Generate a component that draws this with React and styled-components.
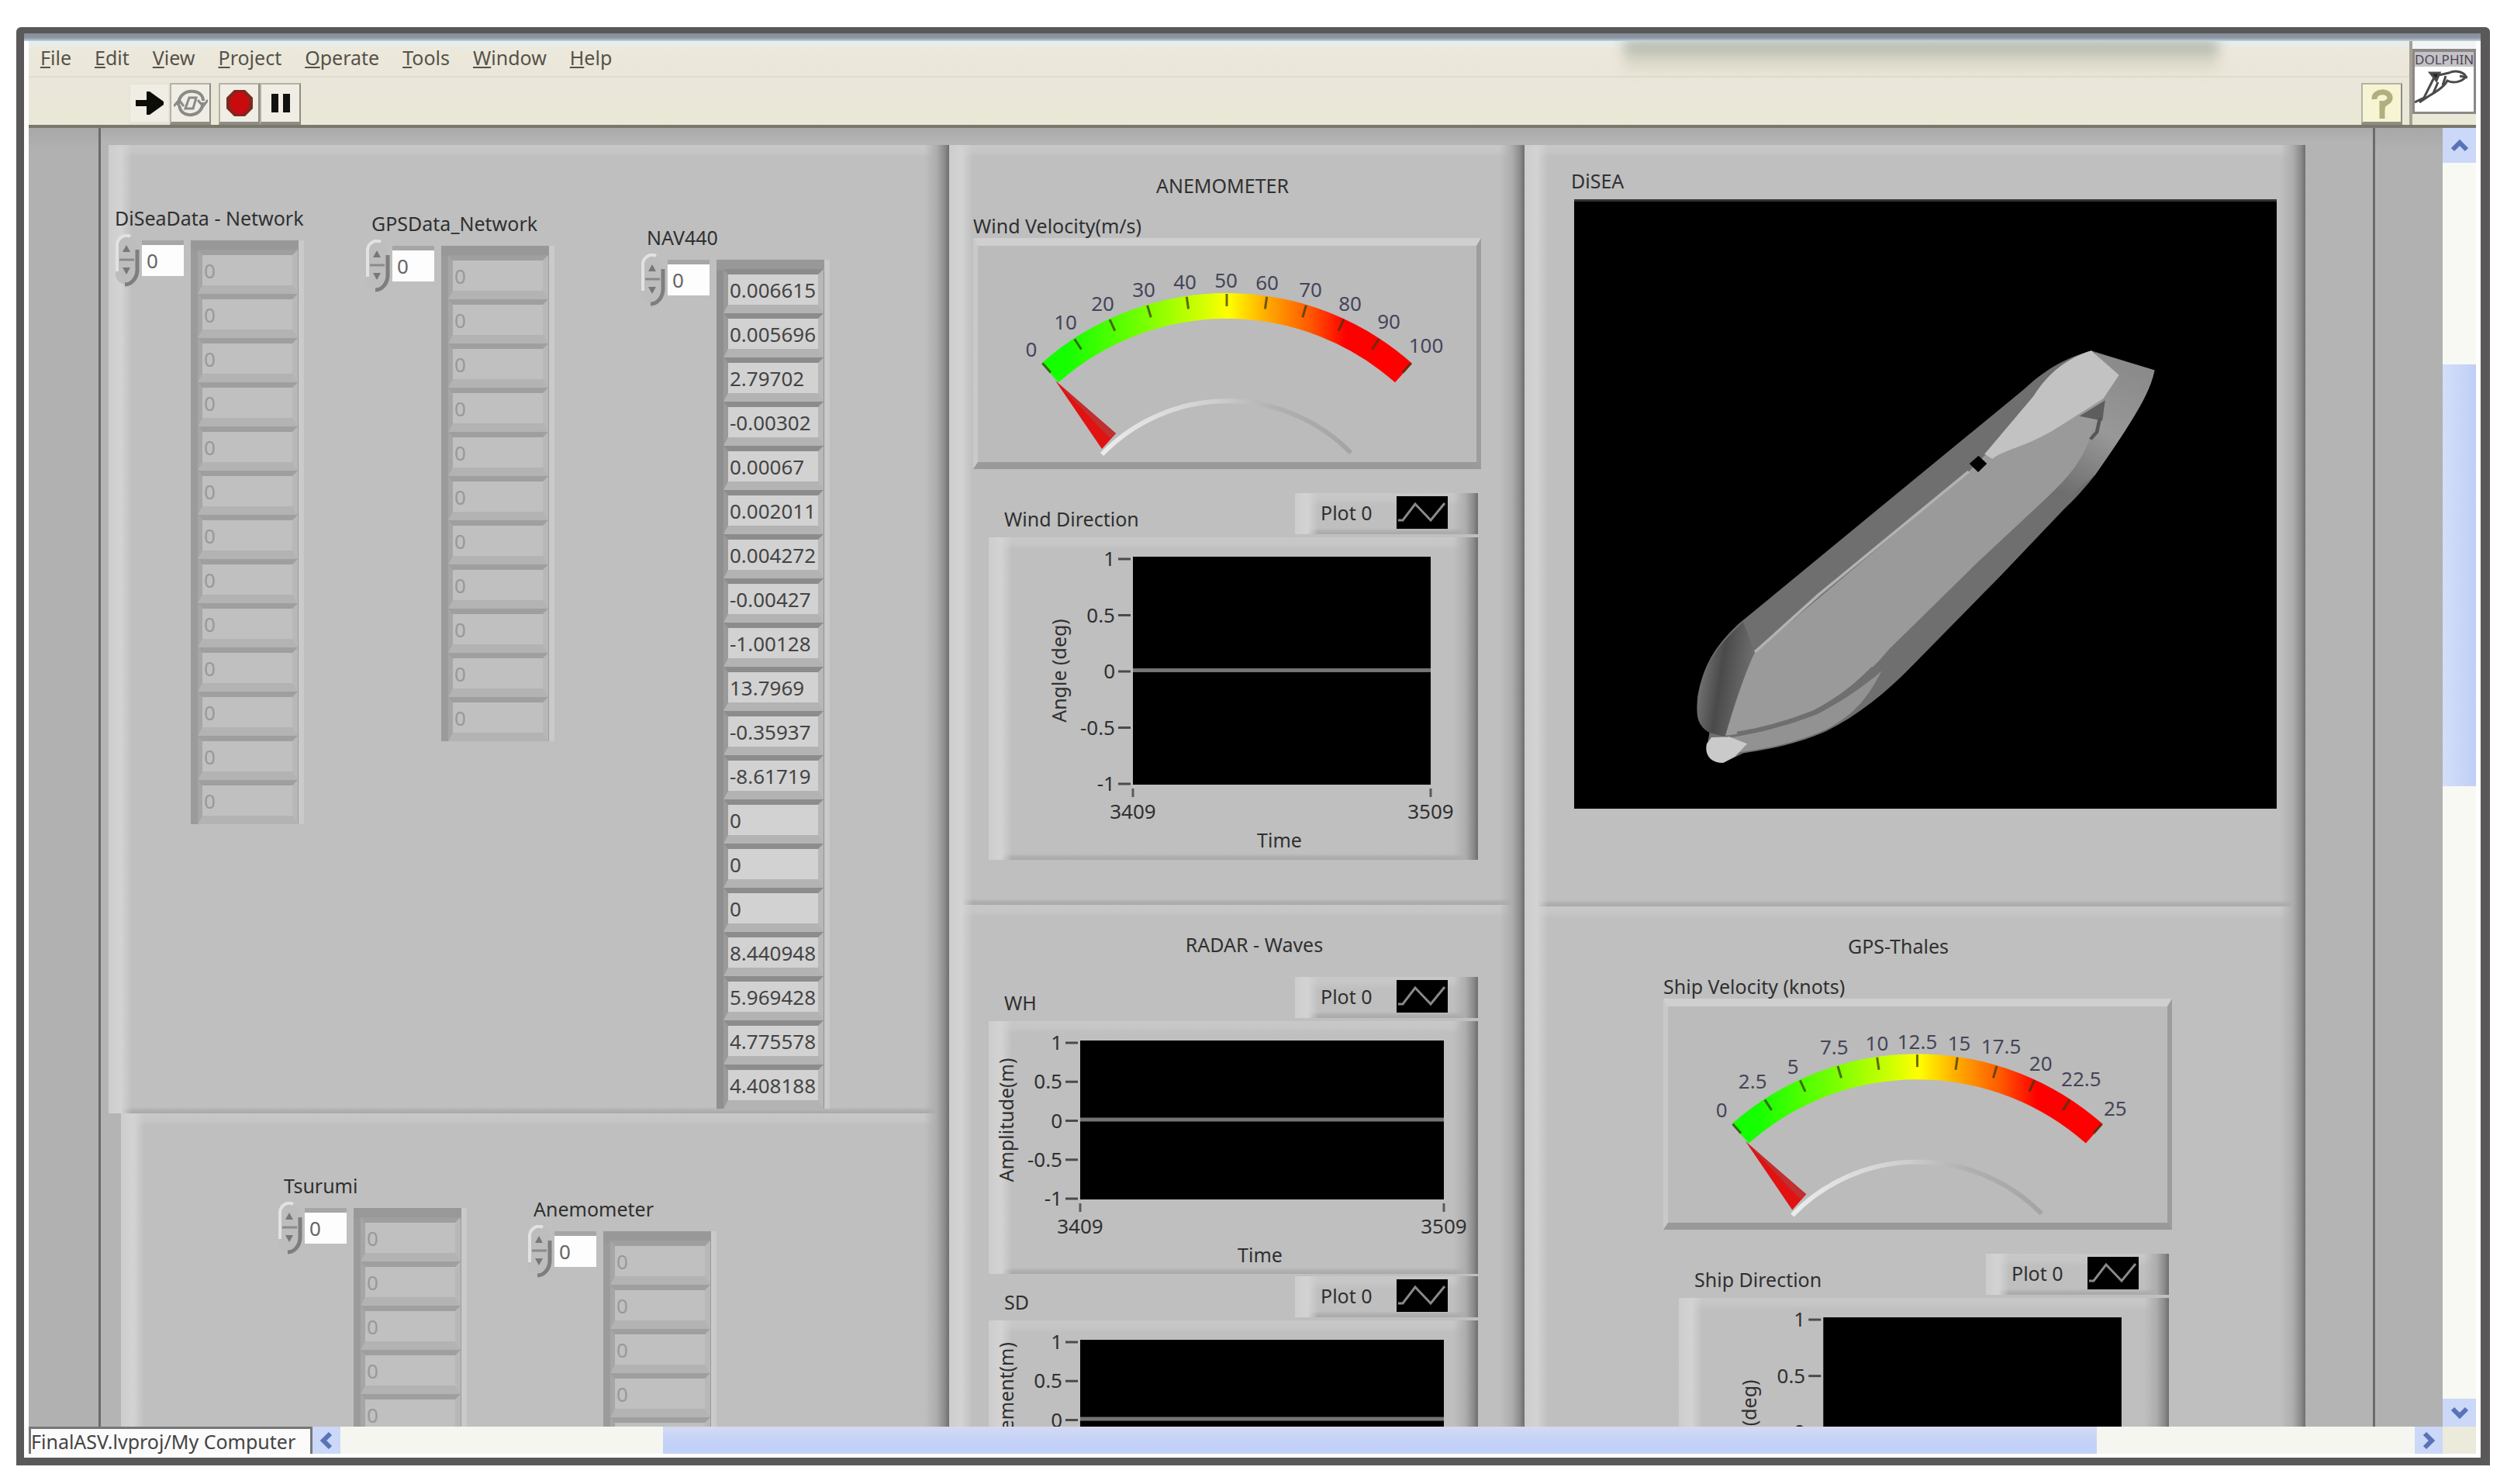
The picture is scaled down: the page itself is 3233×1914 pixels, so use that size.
import React from "react";
import styled, { createGlobalStyle, css } from "styled-components";

const Global = createGlobalStyle`
  *, *::before, *::after { box-sizing: border-box; }
  body { margin: 0; background: #fff; }
  body, button, input { font-family: "Noto Sans", "Open Sans", sans-serif; }
  button, input { border: 0; padding: 0; margin: 0; border-radius: 0; background: none; color: inherit; }
`;

/* ---------- shared looks ---------- */

const bevel = css`
  background:
    linear-gradient(to left, #6e6e6e 0, #8c8c8c 6px, #adadad 16px, rgba(191, 191, 191, 0) 32px),
    linear-gradient(to right, #cdcdcd 0, #d3d3d3 16px, rgba(191, 191, 191, 0) 30px),
    linear-gradient(to bottom, #c8c8c8 0, #c6c6c6 8px, rgba(191, 191, 191, 0) 16px),
    linear-gradient(to top, #a9a9a9 0, #b0b0b0 4px, rgba(191, 191, 191, 0) 8px),
    #bfbfbf;
`;

/* ---------- window ---------- */

const Page = styled.div`
  height: 100vh;
  padding: 35px 22px 24px 21px;
`;

const Window = styled.main`
  height: 100%;
  display: flex;
  flex-direction: column;
  border: solid #5a5858;
  border-width: 8px 12px 10px 10px;
  border-radius: 6px 6px 0 0;
  background: #fff;
`;

const TitleEdge = styled.div`
  flex: none;
  height: 10px;
  background: linear-gradient(#858b98, #8d98a4 60%, #c4d4dc);
`;

const Frame = styled.div`
  flex: 1;
  min-height: 0;
  display: flex;
  flex-direction: column;
  padding: 0 6px 5px;
`;

const Header = styled.header`
  flex: none;
  display: flex;
  height: 112px;
  border-bottom: 4px solid #7a786c;
  background: linear-gradient(#e6eeee 0, #ece8da 14px, #eae6da 50px, #eae8d6 100%);
`;

const Bars = styled.div`
  position: relative;
  flex: 1;
  display: flex;
  flex-direction: column;
`;

const TabShadow = styled.div`
  position: absolute;
  top: 0;
  left: 67%;
  width: 25%;
  height: 40px;
  background: linear-gradient(#9aa0a0, #cdcebc 40%, rgba(222, 220, 205, 0.4));
  filter: blur(8px);
  clip-path: inset(0 -24px -24px -24px);
`;

const MenuBar = styled.nav`
  display: flex;
  height: 47px;
  border-bottom: 2px solid #e0dccd;
`;

const MenuButton = styled.button`
  padding: 0 15px;
  font-size: 25px;
  line-height: 32px;
  padding-bottom: 4px;
  color: #55524a;
  &::first-letter { text-decoration: underline; }
`;

const ToolBar = styled.div`
  flex: 1;
  display: flex;
  align-items: flex-end;
  padding: 0 9px 0 129px;
`;

const ToolButton = styled.button`
  display: grid;
  place-items: center;
  width: 53px;
  height: 54px;
  margin-right: ${(p) => p.$after || 0}px;
  margin-left: ${(p) => (p.$end ? "auto" : 0)};
  background: ${(p) => (p.$end ? "#f6f4d2" : "#f0eee4")};
  border: solid ${(p) => (p.$flat ? "#e6e4d8" : "#b4b2a6")};
  border-width: 2px 2px 4px 2px;
  border-right-color: ${(p) => (p.$flat ? "#e6e4d8" : "#8e8d84")};
  border-bottom-color: ${(p) => (p.$flat ? "#e6e4d8" : "#8e8d84")};
`;

const LogoCell = styled.div`
  width: 86px;
  padding-top: 10px;
  border-left: 4px solid #a5a293;
  background: linear-gradient(#f2f5f6 0, #f2f5f6 90px, #eae8d6 94px);
`;

const LogoBox = styled.div`
  height: 84px;
  overflow: hidden;
  border: 3px solid #8b8888;
  border-top-width: 4px;
  background: #fff;
`;

const LogoText = styled.div`
  font-size: 17px;
  line-height: 19px;
  text-align: center;
  color: #4c4656;
  background: #c4c2c6;
`;

/* ---------- work area ---------- */

const Work = styled.div`
  flex: 1;
  min-height: 0;
  display: flex;
`;

const Gutter = styled.div`
  width: ${(p) => p.$width}px;
  background: linear-gradient(#a8a8a8, #b1b1b1 30px);
  border: 0 solid #6b6b6b;
  border-width: ${(p) => (p.$left ? "0 3px 0 0" : "0 0 0 3px")};
`;

const Canvas = styled.div`
  flex: 1;
  min-width: 0;
  overflow: hidden;
  display: grid;
  grid-template-columns: 1084fr 742fr 1007fr;
  padding: 22px 87px 0 10px;
  background: linear-gradient(#aaaaac, #b4b4b4 18px);
`;

const Column = styled.div`
  display: flex;
  flex-direction: column;
`;

const Panel = styled.section`
  ${bevel}
  flex: ${(p) => (p.$grow ? "1 0 auto" : "none")};
  margin-left: ${(p) => p.$indent || 0}px;
  padding: ${(p) => p.$pad};
`;

const ArrayRow = styled.div`
  display: flex;
  align-items: flex-start;
`;

/* ---------- array control ---------- */

const ArrayGroup = styled.div`
  width: 244px;
  margin: ${(p) => p.$drop || 0}px 0 0 ${(p) => p.$gap || 0}px;
`;

const Caption = styled.label`
  display: block;
  padding-left: ${(p) => p.$indent || 0}px;
  margin-top: ${(p) => p.$before || 0}px;
  margin-bottom: ${(p) => p.$after || 0}px;
  font-size: 25px;
  line-height: 32px;
  white-space: nowrap;
  color: #303030;
`;

const SpinButton = styled.button`
  display: block;
  width: 32px;
  height: 68px;
  margin-right: 3px;
`;

const IndexInput = styled.input`
  width: 54px;
  height: 46px;
  margin: 8px 9px 0 0;
  padding-left: 6px;
  border-top: 6px solid #a6a6a6;
  background: #fdfdfd;
  font-size: 26px;
  color: #666;
`;

const Cells = styled.div`
  width: 146px;
  margin-top: 8px;
  padding: 12px 8px 0 9px;
  background: linear-gradient(to left, #cacaca 7px, rgba(0, 0, 0, 0) 7px),
    linear-gradient(#989898 12px, rgba(0, 0, 0, 0) 15px), ${(p) => (p.$live ? "#8f8f8f" : "#9b9b9b")};
`;

const Cell = styled.input`
  display: block;
  width: 100%;
  height: 57px;
  padding: 0 2px;
  border: solid ${(p) => (p.$live ? "#8c8c8c" : "#9f9f9f")};
  border-width: 7px 7px 11px 6px;
  border-left-color: ${(p) => (p.$live ? "#9a9a9a" : "#a6a6a6")};
  border-right-color: #b8b8b8;
  border-bottom-color: #b3b3b3;
  background: ${(p) => (p.$live ? "#d2d2d2" : "#c0c0c0")};
  font-size: 26px;
  line-height: 38px;
  color: ${(p) => (p.$live ? "#444" : "#999")};
`;

/* ---------- instruments ---------- */

const Heading = styled.h2`
  margin: 0;
  padding: 0 ${(p) => p.$right || 0}px 0 ${(p) => p.$left || 0}px;
  font-size: 25px;
  line-height: 32px;
  font-weight: 400;
  text-align: center;
  color: #303030;
`;

const GaugeBox = styled.div`
  border: solid;
  border-width: 10px 6px 9px 6px;
  border-color: #cfcfcf #9d9d9d #999 #c9c9c9;
  background: #bbb;
  svg { display: block; width: 100%; height: auto; }
`;

const ChartBlock = styled.div`
  margin: ${(p) => p.$before}px 4px 0 20px;
`;

const ChartHead = styled.div`
  display: flex;
  justify-content: space-between;
  align-items: flex-end;
  padding-left: 20px;
  margin-bottom: 4px;
`;

const Legend = styled.div`
  ${bevel}
  display: flex;
  align-items: center;
  justify-content: space-between;
  width: 236px;
  height: 53px;
  padding: 0 39px 4px 33px;
  font-size: 25px;
  line-height: 32px;
  color: #303030;
  svg { display: block; background: #000; }
`;

const ChartBox = styled.div`
  ${bevel}
  svg { display: block; width: 100%; height: auto; }
`;

const ShipView = styled.div`
  margin: 8px 0 0 4px;
  background: #000;
  border-top: 3px solid #333;
  svg { display: block; width: 100%; height: auto; }
`;

/* ---------- scroll bars and status ---------- */

const VScroll = styled.div`
  display: flex;
  flex-direction: column;
  width: 43px;
  background: #f8f9f2;
`;

const HScroll = styled.footer`
  flex: none;
  display: flex;
  height: 35px;
  background: #f6f6f1;
`;

const ArrowButton = styled.button`
  flex: none;
  display: grid;
  place-items: center;
  width: ${(p) => p.$w}px;
  height: ${(p) => p.$h}px;
  background: #cbd8f8;
  color: #5a72b8;
`;

const Spacer = styled.div`
  flex: ${(p) => p.$size} 1 0;
`;

const Thumb = styled.div`
  flex: ${(p) => p.$size} 1 0;
  background: ${(p) =>
    p.$vertical ? "linear-gradient(to right, #d3def9, #c0cff6)" : "linear-gradient(#d3daf4, #c2d1f7 60%)"};
`;

const Status = styled.div`
  width: 366px;
  overflow: hidden;
  border: 3px solid #777;
  border-bottom: 0;
  background: #fbfbfb;
  font-size: 25px;
  line-height: 32px;
  white-space: nowrap;
  color: #444;
`;

const Corner = styled.div`
  width: 43px;
  background: #eceadb;
`;

/* ---------- drawings ---------- */

const Chevron = ({ turn }) => (
  <svg width="24" height="24" viewBox="0 0 24 24" fill="none" stroke="currentColor" strokeWidth="6">
    <path d="M3 17 L12 8 L21 17" transform={`rotate(${turn} 12 12)`} />
  </svg>
);

const SpinnerArt = () => (
  <svg width="32" height="68" viewBox="0 0 32 68">
    <rect x="1" y="2" width="28" height="63" rx="14" fill="#bdbdbd" />
    <path d="M3 48 V16 A12 13 0 0 1 20 3" fill="none" stroke="#e2e2e2" strokeWidth="4" />
    <path d="M29 20 V46 C29 56 22 65 13 65" fill="none" stroke="#7e7e7e" strokeWidth="5" />
    <path d="M6 33 H25" stroke="#8a8a8a" strokeWidth="3" />
    <path d="M10 23 L15 14 L20 23 Z M10 43 L15 52 L20 43 Z" fill="#777" />
  </svg>
);

const RunIcon = () => (
  <svg width="40" height="36" viewBox="0 0 40 36">
    <path d="M2 14 H16 V3 H20 L38 16 V20 L20 33 H16 V22 H2 Z" fill="#0c0c08" />
  </svg>
);

const RunLoopIcon = () => (
  <svg width="44" height="38" viewBox="0 0 44 38" fill="none" stroke="#8a8a88" strokeWidth="4">
    <path d="M6 22 C6 8 16 3 26 4 C35 5 38 11 38 16" />
    <path d="M38 18 C37 30 28 35 19 34 C11 33 8 28 7 22" />
    <path d="M31 15 L38 23 L44 15 M0 23 L7 15 L13 23" strokeWidth="3" />
    <path d="M15 26 L20 12 H29 L25 26 Z" strokeWidth="3" />
  </svg>
);

const StopIcon = () => (
  <svg width="36" height="36" viewBox="0 0 36 36">
    <path d="M11 1 H25 L35 11 V25 L25 35 H11 L1 25 V11 Z" fill="#7c2a20" />
    <path d="M13 4 H23 L30 12 V24 L23 32 H13 L6 24 V12 Z" fill="#c90a0e" />
  </svg>
);

const PauseIcon = () => (
  <svg width="26" height="26" viewBox="0 0 26 26">
    <path d="M1 1 H10 V25 H1 Z M16 1 H25 V25 H16 Z" fill="#111" />
  </svg>
);

const HelpIcon = () => (
  <svg width="32" height="42" viewBox="0 0 32 42" fill="none" stroke="#b1ae80">
    <path d="M6 16 C5 4 27 4 26 15 C26 21 16 19 16 29" strokeWidth="7" />
    <path d="M16 18 V41" strokeWidth="7" />
  </svg>
);

const DolphinIcon = () => (
  <svg width="76" height="58" viewBox="0 0 76 58" fill="none" stroke="#4a4a4a" strokeWidth="3">
    <path d="M0 46 L12 40 L22 20 L26 12 L44 8 C54 3 64 8 66 13 C60 20 50 22 42 18 C38 26 28 32 18 38 L6 46" />
    <path d="M20 8 L32 8 L28 18 Z" fill="#222" />
    <path d="M36 24 L40 12 M24 34 L30 20 M58 12 L68 14" />
  </svg>
);

const WaveIcon = () => (
  <svg width="66" height="42" viewBox="0 0 66 42" fill="none" stroke="#8a8a8a" strokeWidth="3">
    <path d="M2 31 H8 L24 10 L44 31 L62 9" />
  </svg>
);

const FONT = '"Noto Sans", "Open Sans", sans-serif';

const Gauge = ({ id, labels, name }) => {
  const cx = 327;
  const cy = 432;
  return (
    <GaugeBox>
      <svg viewBox="6 10 643 279" role="img" aria-label={name}>
        <defs>
          <linearGradient id={id} gradientUnits="userSpaceOnUse" x1="92" y1="0" x2="566" y2="0">
            <stop offset="0.06" stopColor="#14ff00" />
            <stop offset="0.25" stopColor="#6dff00" />
            <stop offset="0.42" stopColor="#ccff00" />
            <stop offset="0.5" stopColor="#ffff00" />
            <stop offset="0.6" stopColor="#ffae00" />
            <stop offset="0.72" stopColor="#ff5a00" />
            <stop offset="0.82" stopColor="#ff0000" />
          </linearGradient>
          <linearGradient id={`${id}-rim`} x1="0" y1="0" x2="1" y2="0">
            <stop offset="0" stopColor="#ececec" />
            <stop offset="0.45" stopColor="#cfcfcf" />
            <stop offset="0.7" stopColor="#b0b0b0" />
            <stop offset="1" stopColor="#a4a4a4" />
          </linearGradient>
        </defs>
        <path d="M99 174 A344 344 0 0 1 555 174" fill="none" stroke={`url(#${id})`} strokeWidth="33" />
        {labels.map(([text], i) => {
          const a = ((i * 8.26 - 41.3) * Math.PI) / 180;
          return (
            <line
              key={text}
              x1={cx + 360 * Math.sin(a)}
              y1={cy - 360 * Math.cos(a)}
              x2={cx + 344 * Math.sin(a)}
              y2={cy - 344 * Math.cos(a)}
              stroke="#3a3a10"
              strokeOpacity="0.75"
              strokeWidth="3"
            />
          );
        })}
        <path d="M166 279 A224 224 0 0 1 487 277" fill="none" stroke={`url(#${id}-rim)`} strokeWidth="6" />
        <path d="M106 184 L184 252 L166 272 Z" fill="#e01212" />
        <path d="M106 184 L176 258 L184 252 Z" fill="#c03030" />
        {labels.map(([text, x, y]) => (
          <text key={text} x={x} y={y + 9} textAnchor="middle" fontSize="26" fontFamily={FONT} fill="#45455a">
            {text}
          </text>
        ))}
      </svg>
    </GaugeBox>
  );
};

const tall = { height: 416, x: 186, y: 25, w: 384, h: 294, titleX: 91, timeX: 375 };
const wide = { height: 326, x: 118, y: 25, w: 469, h: 205, titleX: 23, timeX: 350 };

const Chart = ({ label, yTitle, shape, before }) => {
  const s = shape;
  const mid = s.y + s.h / 2;
  const bottom = s.y + s.h;
  const type = { fontFamily: FONT, fill: "#303030" };
  return (
    <ChartBlock $before={before}>
      <ChartHead>
        <Caption as="span" $after={4}>{label}</Caption>
        <Legend>
          Plot 0
          <WaveIcon />
        </Legend>
      </ChartHead>
      <ChartBox>
        <svg viewBox={`0 0 631 ${s.height}`} role="img" aria-label={label}>
          <rect x={s.x} y={s.y} width={s.w} height={s.h} fill="#000" />
          <rect x={s.x} y={mid - 3} width={s.w} height="5" fill="#747474" />
          {["1", "0.5", "0", "-0.5", "-1"].map((t, i) => {
            const y = s.y + 3 + (i * (s.h - 4)) / 4;
            return (
              <g key={t}>
                <line x1={s.x - 19} x2={s.x - 3} y1={y} y2={y} stroke="#4a4a4a" strokeWidth="3" />
                <text x={s.x - 23} y={y + 9} textAnchor="end" fontSize="26" {...type}>
                  {t}
                </text>
              </g>
            );
          })}
          {[["3409", s.x], ["3509", s.x + s.w]].map(([t, x]) => (
            <g key={t}>
              <line x1={x} x2={x} y1={bottom + 5} y2={bottom + 16} stroke="#5a5a5a" strokeWidth="3" />
              <text x={x} y={bottom + 44} textAnchor="middle" fontSize="26" {...type}>
                {t}
              </text>
            </g>
          ))}
          <text x={s.timeX} y={bottom + 81} textAnchor="middle" fontSize="25" {...type}>
            Time
          </text>
          <text
            transform={`translate(${s.titleX + 9} ${mid}) rotate(-90)`}
            textAnchor="middle"
            fontSize="25"
            {...type}
          >
            {yTitle}
          </text>
        </svg>
      </ChartBox>
    </ChartBlock>
  );
};

const Ship = () => (
  <svg viewBox="0 3 906 783" role="img" aria-label="Ship model">
    <defs>
      <linearGradient id="hull-stern" x1="0" y1="0" x2="1" y2="0.3">
        <stop offset="0" stopColor="#858585" />
        <stop offset="0.5" stopColor="#4a4a4a" />
        <stop offset="1" stopColor="#707070" />
      </linearGradient>
      <linearGradient id="hull-bow" x1="0.6" y1="0" x2="0.2" y2="1">
        <stop offset="0" stopColor="#8a8a8a" />
        <stop offset="0.5" stopColor="#989898" />
        <stop offset="1" stopColor="#6e6e6e" />
      </linearGradient>
    </defs>
    <g transform="translate(70 143) scale(0.5102 0.4082)">
      <path
        d="M1170 128 L1330 190 C1322 235 1308 270 1290 310 C1260 375 1225 440 1180 520 C1155 560 1130 595 1100 630 L940 840 L720 1120 C650 1210 580 1280 500 1330 C420 1375 340 1390 290 1400 L240 1430 C210 1430 195 1410 200 1370 L205 1335 C175 1310 170 1290 175 1220 C190 1120 220 1060 280 990 L620 640 L1000 250 C1060 180 1110 150 1170 128 Z"
        fill="#6f6f6f"
      />
      <path
        d="M290 985 C225 1060 190 1120 176 1220 C172 1290 178 1315 205 1335 L250 1350 L320 1080 Z"
        fill="url(#hull-stern)"
      />
      <path
        d="M1180 134 L1330 190 C1322 235 1308 270 1290 310 C1260 375 1225 440 1180 520 L1120 580 L1060 590 L1160 420 L1200 250 Z"
        fill="url(#hull-bow)"
      />
      <path
        d="M860 510 L320 1080 C290 1160 265 1260 245 1345 C330 1330 400 1310 450 1285 C530 1230 600 1160 660 1070 L880 800 L1060 590 C1110 530 1145 480 1165 410 L1200 280 L900 460 Z"
        fill="#9a9a9a"
      />
      <path d="M860 510 L480 900 L320 1080" fill="none" stroke="#b2b2b2" strokeWidth="8" />
      <path
        d="M250 1352 C340 1335 420 1305 480 1275 C540 1235 590 1195 640 1140 C600 1240 560 1285 500 1325 C420 1370 340 1387 280 1397 Z"
        fill="#929292"
      />
      <path d="M275 1338 C360 1320 430 1290 470 1270 C540 1225 580 1180 620 1130" fill="none" stroke="#6f6f6f" strokeWidth="12" />
      <path
        d="M1170 128 C1110 150 1060 200 1025 270 L900 455 L920 470 C950 440 1010 430 1080 375 L1200 280 L1240 205 Z"
        fill="#c2c2c2"
      />
      <path d="M1140 335 L1205 285 L1198 350 L1180 345 Z" fill="#5e5e5e" />
      <path d="M1192 340 L1184 385 L1168 408" fill="none" stroke="#555" strokeWidth="9" />
      <path d="M862 485 L885 460 L906 485 L884 512 Z" fill="#000" />
      <path d="M210 1350 L255 1348 L300 1370 L270 1410 L240 1430 C205 1432 192 1400 198 1370 Z" fill="#cacaca" />
    </g>
  </svg>
);

const ArrayControl = ({ id, label, values, live, drop, gap, indent }) => (
  <ArrayGroup $drop={drop} $gap={gap}>
    <Caption htmlFor={id} $indent={indent} $after={5}>
      {label}
    </Caption>
    <ArrayRow>
      <SpinButton aria-label={`${label} index step`}>
        <SpinnerArt />
      </SpinButton>
      <IndexInput id={id} defaultValue="0" />
      <Cells $live={live}>
        {values.map((v, i) => (
          <Cell key={i} $live={live} readOnly value={v} aria-label={`${label} element ${i}`} />
        ))}
      </Cells>
    </ArrayRow>
  </ArrayGroup>
);

/* ---------- data ---------- */

const zeros = (n) => Array.from({ length: n }, () => "0");

const navValues = [
  "0.006615", "0.005696", "2.79702", "-0.00302", "0.00067", "0.002011", "0.004272",
  "-0.00427", "-1.00128", "13.7969", "-0.35937", "-8.61719", "0", "0", "0",
  "8.440948", "5.969428", "4.775578", "4.408188",
];

const windLabels = [
  ["0", 75, 144], ["10", 119, 109], ["20", 167, 85], ["30", 220, 67], ["40", 273, 57], ["50", 326, 55],
  ["60", 379, 58], ["70", 435, 67], ["80", 486, 85], ["90", 536, 108], ["100", 584, 139],
];

const shipLabels = [
  ["0", 75, 144], ["2.5", 115, 107], ["5", 167, 88], ["7.5", 220, 63], ["10", 275, 58], ["12.5", 327, 56],
  ["15", 381, 58], ["17.5", 435, 62], ["20", 486, 84], ["22.5", 538, 104], ["25", 582, 142],
];

const menus = ["File", "Edit", "View", "Project", "Operate", "Tools", "Window", "Help"];

export default function App() {
  return (
    <Page>
      <Global />
      <Window>
        <TitleEdge />
        <Frame>
          <Header>
            <Bars>
              <TabShadow />
              <MenuBar>
                {menus.map((m) => (
                  <MenuButton key={m}>{m}</MenuButton>
                ))}
              </MenuBar>
              <ToolBar>
                <ToolButton $flat aria-label="Run"><RunIcon /></ToolButton>
                <ToolButton $after={10} aria-label="Run continuously"><RunLoopIcon /></ToolButton>
                <ToolButton aria-label="Abort"><StopIcon /></ToolButton>
                <ToolButton aria-label="Pause"><PauseIcon /></ToolButton>
                <ToolButton $end aria-label="Help"><HelpIcon /></ToolButton>
              </ToolBar>
            </Bars>
            <LogoCell>
              <LogoBox>
                <LogoText>DOLPHIN</LogoText>
                <DolphinIcon />
              </LogoBox>
            </LogoCell>
          </Header>

          <Work>
            <Gutter $left $width={93} />
            <Canvas>
              <Column>
                <Panel $pad="78px 0 6px 8px">
                  <ArrayRow>
                    <ArrayControl id="disea" label="DiSeaData - Network" values={zeros(13)} />
                    <ArrayControl id="gps" label="GPSData_Network" values={zeros(11)} drop={7} gap={79} indent={8} />
                    <ArrayControl id="nav" label="NAV440" values={navValues} live drop={25} gap={111} indent={8} />
                  </ArrayRow>
                </Panel>
                <Panel $grow $indent={16} $pad="77px 0 0 202px">
                  <ArrayRow>
                    <ArrayControl id="tsurumi" label="Tsurumi" values={zeros(6)} indent={8} />
                    <ArrayControl id="anemo" label="Anemometer" values={zeros(6)} drop={30} gap={78} indent={8} />
                  </ArrayRow>
                </Panel>
              </Column>

              <Column>
                <Panel $pad="36px 56px 58px 31px">
                  <Heading $right={12}>ANEMOMETER</Heading>
                  <Caption as="div" $before={20}>Wind Velocity(m/s)</Caption>
                  <Gauge id="wind" name="Wind Velocity" labels={windLabels} />
                  <Chart label="Wind Direction" yTitle="Angle (deg)" shape={tall} before={31} />
                </Panel>
                <Panel $grow $pad="35px 56px 40px 31px">
                  <Heading $left={70}>RADAR - Waves</Heading>
                  <Chart label="WH" yTitle="Amplitude(m)" shape={wide} before={26} />
                  <Chart label="SD" yTitle="Displacement(m)" shape={wide} before={3} />
                </Panel>
              </Column>

              <Column>
                <Panel $pad="30px 37px 126px 60px">
                  <Caption as="div">DiSEA</Caption>
                  <ShipView>
                    <Ship />
                  </ShipView>
                </Panel>
                <Panel $grow $pad="35px 172px 40px 179px">
                  <Heading $right={50}>GPS-Thales</Heading>
                  <Caption as="div" $before={20}>Ship Velocity (knots)</Caption>
                  <Gauge id="ship" name="Ship Velocity" labels={shipLabels} />
                  <Chart label="Ship Direction" yTitle="Angle (deg)" shape={tall} before={31} />
                </Panel>
              </Column>
            </Canvas>
            <Gutter $width={90} />
            <VScroll>
              <ArrowButton $w={43} $h={45} aria-label="Scroll up"><Chevron turn={0} /></ArrowButton>
              <Spacer $size={260} />
              <Thumb $vertical $size={543} />
              <Spacer $size={789} />
              <ArrowButton $w={43} $h={36} aria-label="Scroll down"><Chevron turn={180} /></ArrowButton>
            </VScroll>
          </Work>

          <HScroll>
            <Status>FinalASV.lvproj/My Computer</Status>
            <ArrowButton $w={36} $h={35} aria-label="Scroll left"><Chevron turn={-90} /></ArrowButton>
            <Spacer $size={415} />
            <Thumb $size={1845} />
            <Spacer $size={409} />
            <ArrowButton $w={36} $h={35} aria-label="Scroll right"><Chevron turn={90} /></ArrowButton>
            <Corner />
          </HScroll>
        </Frame>
      </Window>
    </Page>
  );
}
